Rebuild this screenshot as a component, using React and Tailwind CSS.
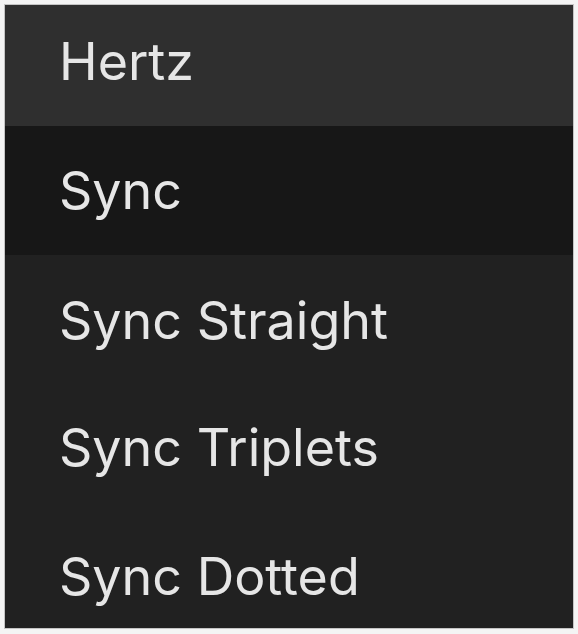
const items = [
  { label: 'Hertz', row: 'h-[121px] bg-[#2f2f2f] pb-[8px]' },
  { label: 'Sync', row: 'h-[129px] bg-[#171717]' },
  { label: 'Sync Straight', row: 'h-[128px] bg-[#212121] pt-[4px]' },
  { label: 'Sync Triplets', row: 'h-[126px] bg-[#212121] pt-[4px]' },
  { label: 'Sync Dotted', row: 'flex-1 bg-[#212121] pt-[16px]' },
];

export default function App() {
  return (
    <div className="w-[578px] h-[634px] bg-[#f4f4f4] pt-[4px] pl-[4px] pr-[4px] pb-[5px] flex">
      <div className="flex-1 flex flex-col border border-[#c4c4c4] bg-[#212121] font-['Inter',sans-serif] text-[#e6e6e6]">
        {items.map((it) => (
          <div key={it.label} className={`${it.row} flex items-center pl-[54px]`}>
            <span className="text-[52px] leading-none">{it.label}</span>
          </div>
        ))}
      </div>
    </div>
  );
}
